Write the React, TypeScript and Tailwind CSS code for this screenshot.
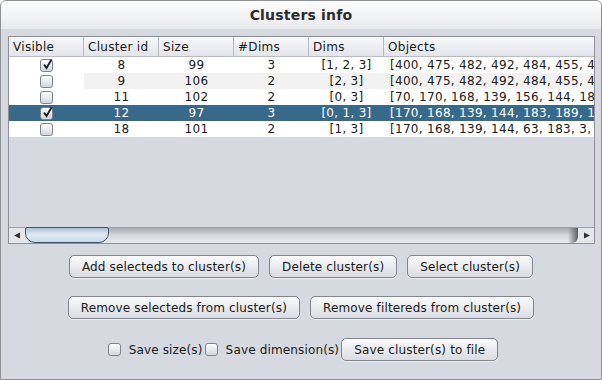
import React from 'react';

type Row = { visible: boolean; id: number; size: number; nd: number; dims: string; objects: string };

const rows: Row[] = [
  { visible: true, id: 8, size: 99, nd: 3, dims: '[1, 2, 3]', objects: '[400, 475, 482, 492, 484, 455, 464, 470]' },
  { visible: false, id: 9, size: 106, nd: 2, dims: '[2, 3]', objects: '[400, 475, 482, 492, 484, 455, 464, 470]' },
  { visible: false, id: 11, size: 102, nd: 2, dims: '[0, 3]', objects: '[70, 170, 168, 139, 156, 144, 183, 189]' },
  { visible: true, id: 12, size: 97, nd: 3, dims: '[0, 1, 3]', objects: '[170, 168, 139, 144, 183, 189, 194, 63]' },
  { visible: false, id: 18, size: 101, nd: 2, dims: '[1, 3]', objects: '[170, 168, 139, 144, 63, 183, 3, 194]' },
];

function Check({ on }: { on: boolean }) {
  return (
    <span className="relative inline-block w-[13px] h-[13px] rounded-[3px] border border-[#7f838a] bg-gradient-to-b from-[#fdfdfe] to-[#d3d7de]">
      {on && (
        <svg viewBox="0 0 13 13" className="absolute left-[0px] top-[-2px] w-[13px] h-[13px]">
          <path d="M3 6.5 L5.5 10 L10.5 1.5" fill="none" stroke="#1b1f24" strokeWidth="1.8" />
        </svg>
      )}
    </span>
  );
}

function Btn({ children }: { children: React.ReactNode }) {
  return (
    <div className="h-[23px] px-[12px] flex items-center rounded-[5px] border border-[#82858b] bg-gradient-to-b from-[#fbfbfc] to-[#d9dce2] text-[12px] tracking-[0.15px] text-[#1a1a1a] whitespace-nowrap shadow-[0_1px_0_#eef0f3]">
      {children}
    </div>
  );
}

const cols = ['Visible', 'Cluster id', 'Size', '#Dims', 'Dims', 'Objects'];
const widths = ['w-[75px]', 'w-[75px]', 'w-[75px]', 'w-[75px]', 'w-[75px]', 'flex-1'];

export default function App() {
  return (
    <div className="w-[602px] h-[380px] bg-[#d6d9df] border border-[#8f9093] rounded-t-[6px] flex flex-col overflow-hidden font-['DejaVu_Sans',sans-serif] text-[12px] tracking-[0.3px] text-[#1a1a1a]">
      {/* title bar */}
      <div className="h-[28px] shrink-0 flex items-center justify-center bg-gradient-to-b from-[#fdfdfd] to-[#e9eaec] text-[14px] font-bold tracking-[0.2px] text-[#2b2b2b]">
        Clusters info
      </div>

      {/* table */}
      <div className="mt-[7px] ml-[7px] mr-[6px] h-[208px] border border-[#8c8f95] flex flex-col bg-[#d6d9df]">
        <div className="h-[20px] flex bg-gradient-to-b from-[#f7f8fa] to-[#e2e4e9] border-b border-[#b9bcc2]">
          {cols.map((c, i) => (
            <div key={c} className={`${widths[i]} h-full flex items-center pl-[4px] border-r border-[#b4b7bd] last:border-r-0`}>
              {c}
            </div>
          ))}
        </div>
        <div className="flex flex-col">
          {rows.map((r, idx) => {
            const sel = r.id === 12;
            const alt = idx % 2 === 1;
            const bg = sel ? 'bg-[#39698a] text-white' : alt ? 'bg-[#f2f2f2]' : 'bg-white';
            return (
              <div key={r.id} className={`h-[16px] flex ${bg}`}>
                <div className={`w-[75px] flex items-center justify-center ${sel ? '' : 'bg-white'}`}>
                  <Check on={r.visible} />
                </div>
                <div className="w-[75px] text-center leading-[16px]">{r.id}</div>
                <div className="w-[75px] text-center leading-[16px]">{r.size}</div>
                <div className="w-[75px] text-center leading-[16px]">{r.nd}</div>
                <div className="w-[75px] text-center leading-[16px]">{r.dims}</div>
                <div className="flex-1 min-w-0 overflow-hidden whitespace-nowrap leading-[16px] pl-[6px]">{r.objects}</div>
              </div>
            );
          })}
        </div>
        <div className="flex-1" />
        {/* horizontal scrollbar */}
        <div className="h-[16px] flex items-stretch bg-gradient-to-b from-[#a9adb4] via-[#d6d9df] to-[#e6e8ec] border-t border-[#9ea2a8]">
          <div className="w-[16px] flex items-center justify-center bg-[#e4e6ea]">
            <svg width="7" height="7" viewBox="0 0 7 7"><path d="M0 3.5 L6 0.5 L6 6.5 Z" fill="#333" /></svg>
          </div>
          <div className="w-[84px] -mt-[1px] rounded-b-[10px] rounded-t-[2px] border border-[#3c5670] bg-gradient-to-b from-[#a9c0d7] via-[#e3ebf4] to-[#c6d7e8]" />
          <div className="flex-1" />
          <div className="w-[10px] bg-gradient-to-r from-transparent to-[#5b5e63] rounded-br-[6px]" />
          <div className="w-[16px] flex items-center justify-center bg-[#e4e6ea]">
            <svg width="7" height="7" viewBox="0 0 7 7"><path d="M7 3.5 L1 0.5 L1 6.5 Z" fill="#333" /></svg>
          </div>
        </div>
      </div>

      {/* buttons */}
      <div className="mt-[11px] flex justify-center gap-[10px]">
        <Btn>Add selecteds to cluster(s)</Btn>
        <Btn>Delete cluster(s)</Btn>
        <Btn>Select cluster(s)</Btn>
      </div>
      <div className="mt-[18px] flex justify-center gap-[10px]">
        <Btn>Remove selecteds from cluster(s)</Btn>
        <Btn>Remove filtereds from cluster(s)</Btn>
      </div>
      <div className="mt-[19px] flex justify-center items-center tracking-[0.15px]">
        <div className="flex items-center gap-[8px] pl-[4px]">
          <Check on={false} />
          <span>Save size(s)</span>
        </div>
        <div className="flex items-center gap-[8px] pl-[2px] pr-[2px]">
          <Check on={false} />
          <span>Save dimension(s)</span>
        </div>
        <Btn>Save cluster(s) to file</Btn>
      </div>
    </div>
  );
}
